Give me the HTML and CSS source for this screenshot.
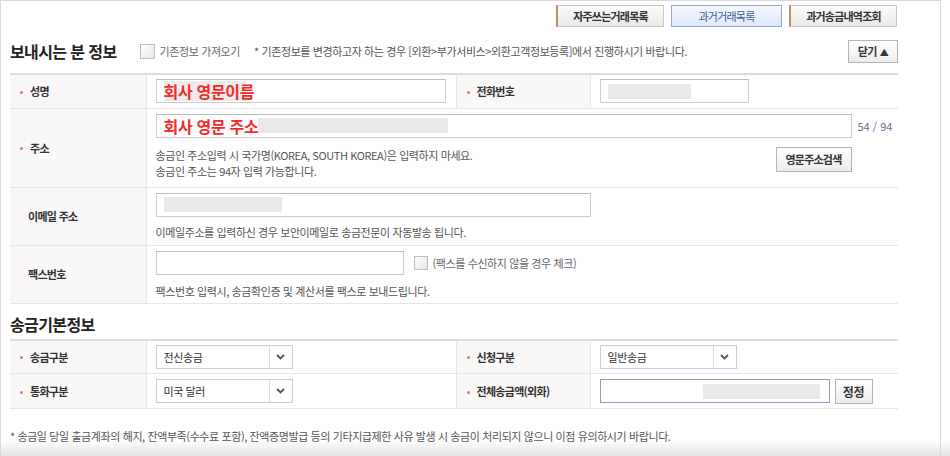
FILE: index.html
```html
<!DOCTYPE html>
<html lang="ko">
<head>
  <meta charset="UTF-8" />
  <meta name="viewport" content="width=device-width, initial-scale=1.0" />
  <title>해외송금 - 보내시는 분 정보</title>
  <link rel="stylesheet" href="styles.css">
</head>
<body>
  <div class="frame">
    <div class="topbar">
      <button class="tab">자주쓰는거래목록</button>
      <button class="tab tab-on">과거거래목록</button>
      <button class="tab">과거송금내역조회</button>
    </div>

    <div class="sec-head">
      <h2 class="sec-title">보내시는 분 정보</h2>
      <label class="chk"><span class="box"></span>기존정보 가져오기</label>
      <span class="head-note">* 기존정보를 변경하고자 하는 경우 [외환&gt;부가서비스&gt;외환고객정보등록]에서 진행하시기 바랍니다.</span>
      <button class="btn btn-close">닫기 <span class="tri">▲</span></button>
    </div>

    <table class="form form-top">
      <colgroup>
        <col class="c-th1"><col class="c-td1"><col class="c-th2"><col class="c-td2">
      </colgroup>
      <tr class="r-name">
        <th><i class="req"></i>성명</th>
        <td class="mid"><div class="inp w-name"><b class="red red-name">회사 영문이름</b></div></td>
        <th><i class="req"></i>전화번호</th>
        <td class="mid"><div class="inp w-tel"><span class="mask mask-tel"></span></div></td>
      </tr>
      <tr class="r-addr">
        <th><i class="req"></i>주소</th>
        <td colspan="3" class="top">
          <div class="line">
            <div class="inp w-addr"><b class="red">회사 영문 주소</b><span class="mask mask-addr"></span></div>
            <span class="count">54 / 94</span>
          </div>
          <div class="addr-help">
            <p class="help">송금인 주소입력 시 국가명(KOREA, SOUTH KOREA)은 입력하지 마세요.<br>송금인 주소는 94자 입력 가능합니다.</p>
            <button class="btn btn-addr">영문주소검색</button>
          </div>
        </td>
      </tr>
      <tr class="r-mail">
        <th class="plain">이메일 주소</th>
        <td colspan="3" class="top">
          <div class="inp w-mail"><span class="mask mask-mail"></span></div>
          <p class="help help-mail">이메일주소를 입력하신 경우 보안이메일로 송금전문이 자동발송 됩니다.</p>
        </td>
      </tr>
      <tr class="r-fax">
        <th class="plain">팩스번호</th>
        <td colspan="3" class="top">
          <div class="line">
            <div class="inp w-fax"></div>
            <label class="chk chk-fax"><span class="box"></span>(팩스를 수신하지 않을 경우 체크)</label>
          </div>
          <p class="help help-fax">팩스번호 입력시, 송금확인증 및 계산서를 팩스로 보내드립니다.</p>
        </td>
      </tr>
    </table>

    <div class="sec-head sec-head2">
      <h2 class="sec-title">송금기본정보</h2>
    </div>

    <table class="form form-basic">
      <colgroup>
        <col class="c-th1"><col class="c-td1"><col class="c-th2"><col class="c-td2">
      </colgroup>
      <tr class="r-sel1">
        <th><i class="req"></i>송금구분</th>
        <td class="mid"><div class="sel"><span class="sel-val">전신송금</span><span class="sel-arr"><svg width="9" height="6" viewBox="0 0 9 6"><path d="M1 1l3.5 3.5L8 1" fill="none" stroke="#555" stroke-width="1.8"/></svg></span></div></td>
        <th><i class="req"></i>신청구분</th>
        <td class="mid"><div class="sel"><span class="sel-val">일반송금</span><span class="sel-arr"><svg width="9" height="6" viewBox="0 0 9 6"><path d="M1 1l3.5 3.5L8 1" fill="none" stroke="#555" stroke-width="1.8"/></svg></span></div></td>
      </tr>
      <tr class="r-sel2">
        <th><i class="req"></i>통화구분</th>
        <td class="mid"><div class="sel"><span class="sel-val">미국 달러</span><span class="sel-arr"><svg width="9" height="6" viewBox="0 0 9 6"><path d="M1 1l3.5 3.5L8 1" fill="none" stroke="#555" stroke-width="1.8"/></svg></span></div></td>
        <th><i class="req"></i>전체송금액(외화)</th>
        <td class="mid">
          <div class="line">
            <div class="inp inp-amt"><span class="mask mask-amt"></span></div>
            <button class="btn btn-fix">정정</button>
          </div>
        </td>
      </tr>
    </table>

    <p class="foot-note">* 송금일 당일 출금계좌의 해지, 잔액부족(수수료 포함), 잔액증명발급 등의 기타지급제한 사유 발생 시 송금이 처리되지 않으니 이점 유의하시기 바랍니다.</p>
  </div>
</body>
</html>
```

FILE: styles.css
```css
body {
  margin: 0;
  height: 456px;
  overflow: hidden;
  background: linear-gradient(180deg, #fff 0, #fff 440px, #e2e2e2 456px);
  font-family: 'Noto Sans CJK KR', 'Noto Sans', sans-serif;
  font-size: 11px;
  letter-spacing: -0.4px;
  color: #444;
}

.frame {
  width: 941px;
  height: 456px;
  box-sizing: border-box;
  border: 1px solid #dadada;
  border-bottom: none;
  padding: 4px 41px 0 9px;
}

button {
  font-family: inherit;
  letter-spacing: inherit;
  cursor: pointer;
}

/* top tabs */
.topbar {
  display: flex;
  justify-content: flex-end;
  gap: 7px;
  padding-right: 2px;
}

.tab {
  height: 22px;
  width: 108px;
  padding: 0;
  font-size: 11px;
  font-weight: bold;
  letter-spacing: -0.8px;
  color: #333;
  background: linear-gradient(180deg, #fbfbfb 0%, #e9e9e9 100%);
  border: 1px solid #c8c8c8;
  border-left: 2px solid #b9925f;
}

.tab-on {
  width: 111px;
  font-weight: normal;
  color: #3b5b9c;
  background: linear-gradient(180deg, #f6f9fe 0%, #dfe9f7 100%);
  border: 1px solid #8ea8d2;
}

/* section heads */
.sec-head {
  display: flex;
  align-items: center;
  height: 24px;
  margin: 12px 0 10px;
}

.sec-head2 {
  margin: 8px 0 3px;
}

.sec-title {
  margin: 0;
  font-size: 16px;
  font-weight: bold;
  letter-spacing: -0.6px;
  color: #222;
}

.chk {
  display: flex;
  align-items: center;
  color: #666;
  margin-left: 23px;
}

.box {
  width: 13px;
  height: 13px;
  border: 1px solid #bdbdbd;
  background: linear-gradient(135deg, #fff 0%, #e6e6e6 100%);
  margin-right: 5px;
}

.head-note {
  margin-left: 14px;
  color: #555;
}

.btn {
  padding: 0;
  font-size: 11px;
  font-weight: bold;
  color: #333;
  background: linear-gradient(180deg, #fff 0%, #ececec 100%);
  border: 1px solid #b4b4b4;
}

.btn-close {
  margin-left: auto;
  margin-right: 1px;
  width: 50px;
  height: 23px;
}

.tri {
  font-size: 9px;
}

/* form tables */
.form {
  width: 888px;
  table-layout: fixed;
  border-collapse: collapse;
}

.form-top {
  border-top: 2px solid #dcdcdc;
}

.form-basic {
  border-top: 2px solid #dcdcdc;
  border-bottom: 1px solid #cfcfcf;
}

.c-th1 { width: 136px; }
.c-td1 { width: 310px; }
.c-th2 { width: 134px; }
.c-td2 { width: 308px; }

.form th {
  text-align: left;
  font-weight: bold;
  letter-spacing: -0.7px;
  color: #333;
  background: #f9f7f8;
  padding: 0 0 0 10px;
  border-bottom: 1px solid #e6e6e6;
  border-right: 1px solid #e6e6e6;
  border-left: 1px solid #e6e6e6;
  white-space: nowrap;
}

.form th:first-child {
  border-left: none;
}

.form th.plain {
  padding-left: 18px;
}

.form td {
  padding: 0 0 0 9px;
  border-bottom: 1px solid #e6e6e6;
}

.form td.mid { vertical-align: middle; }
.form td.top { vertical-align: top; }

.req {
  display: inline-block;
  width: 3px;
  height: 3px;
  border-radius: 50%;
  background: #e0707d;
  vertical-align: middle;
  margin: 0 7px 2px 0;
}

.r-name { height: 34px; }
.r-addr { height: 79px; }
.r-mail { height: 58px; }
.r-fax { height: 58px; }
.r-sel1 { height: 34px; }
.r-sel2 { height: 35px; }

.r-addr td, .r-mail td, .r-fax td { padding-top: 5px; }

.line {
  display: flex;
  align-items: center;
}

.inp {
  display: flex;
  align-items: center;
  box-sizing: border-box;
  height: 24px;
  padding: 0 7px;
  background: #fff;
  border: 1px solid #cdcdcd;
  border-top-color: #bdbdbd;
}

.w-name { width: 290px; }
.w-tel { width: 149px; }
.w-addr { width: 696px; }
.w-mail { width: 435px; }
.w-fax { width: 248px; }

.red {
  color: #f42a2a;
  font-size: 16px;
  letter-spacing: -0.3px;
  line-height: 20px;
}

.red-name {
  background: linear-gradient(90deg, #ececec 0, #ececec 82px, transparent 82px);
}

.mask {
  display: inline-block;
  height: 15px;
  background: #e9e9e9;
}

.mask-tel { width: 83px; }
.mask-addr { width: 190px; }
.mask-mail { width: 118px; }
.mask-amt { width: 117px; margin-left: auto; margin-right: 1px; }

.count {
  margin-left: 6px;
  color: #6d6d9c;
  letter-spacing: 0;
}

.help {
  margin: 0;
  line-height: 16px;
  color: #555;
}

.addr-help {
  display: flex;
  align-items: flex-start;
  justify-content: space-between;
  width: 696px;
  margin-top: 9px;
}

.btn-addr {
  width: 76px;
  height: 25px;
  margin-top: 0;
  letter-spacing: -0.8px;
}

.help-mail { margin-top: 7px; }
.help-fax { margin-top: 8px; }

.chk-fax {
  margin-left: 10px;
}

.chk-fax .box {
  width: 12px;
  height: 12px;
}

/* selects */
.sel {
  display: flex;
  box-sizing: border-box;
  width: 137px;
  height: 24px;
  border: 1px solid #cdcdcd;
  background: #fff;
}

.sel-val {
  flex: 1;
  display: flex;
  align-items: center;
  padding-left: 7px;
  color: #333;
}

.sel-arr {
  width: 22px;
  display: flex;
  align-items: center;
  justify-content: center;
  border-left: 1px solid #dcdcdc;
}

.inp-amt {
  width: 230px;
  border: 1px solid #8aa1bf;
  padding-right: 8px;
}

.btn-fix {
  width: 38px;
  height: 25px;
  margin-left: 5px;
  font-size: 12px;
}

.foot-note {
  margin: 19px 0 0;
  color: #555;
}
```
